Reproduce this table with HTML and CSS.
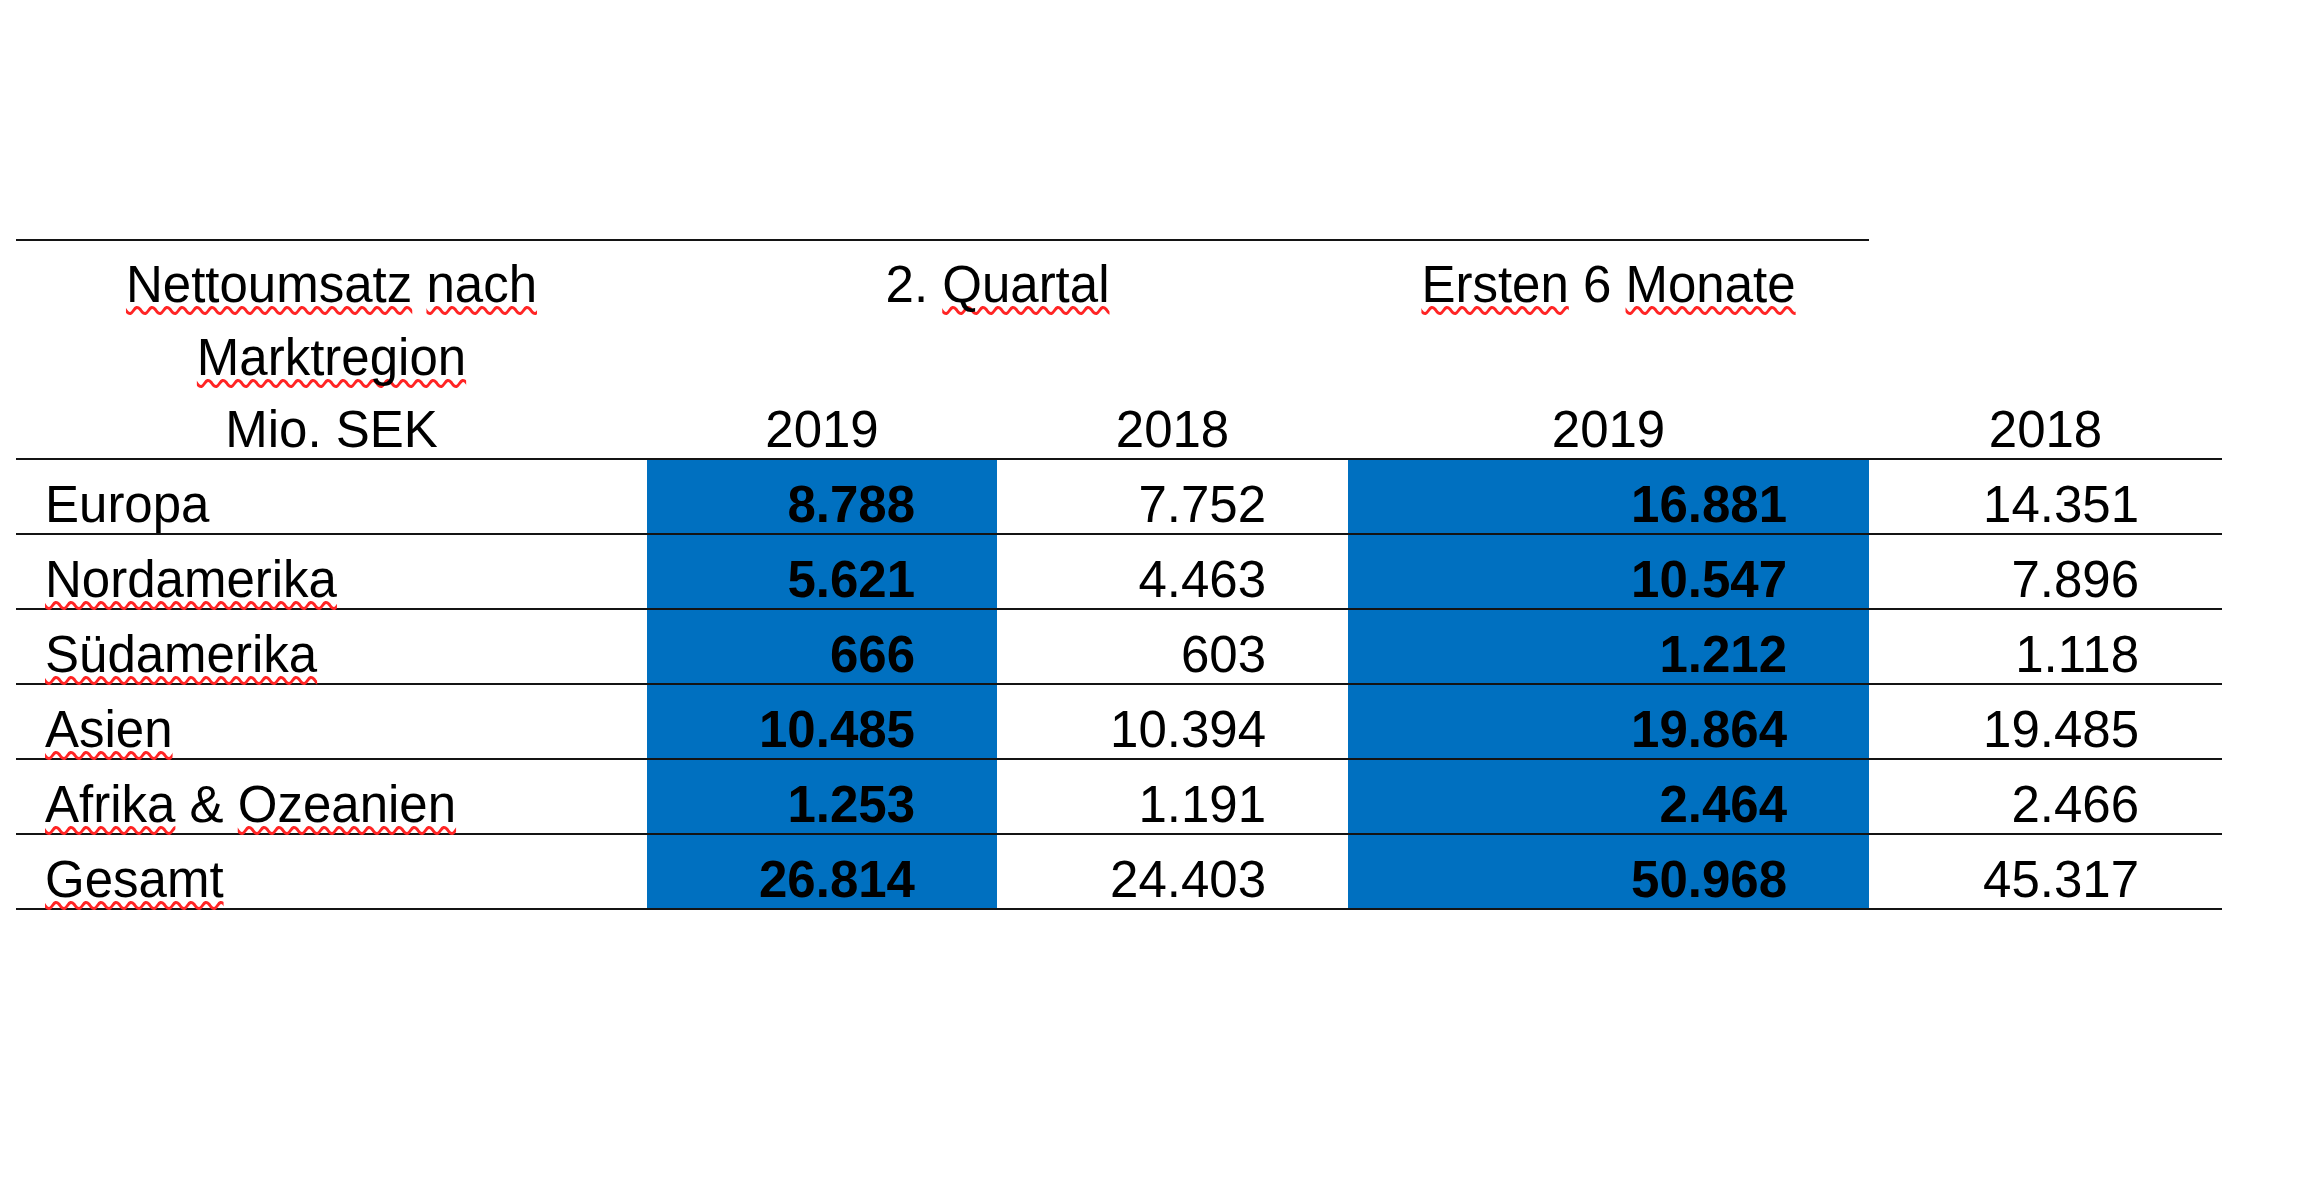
FILE: index.html
```html
<!DOCTYPE html>
<html lang="de">
<head>
<meta charset="utf-8">
<title>Nettoumsatz nach Marktregion</title>
<link rel="stylesheet" href="styles.css">
</head>
<body>
<table class="sales">
  <colgroup>
    <col class="c-region">
    <col class="c-q19">
    <col class="c-q18">
    <col class="c-h19">
    <col class="c-h18">
  </colgroup>
  <thead>
    <tr class="head-top">
      <th class="stub ruled" rowspan="2">
        <div class="stub-text"><span class="sp">Nettoumsatz</span> <span class="sp">nach</span><br><span class="sp">Marktregion</span><br>Mio. SEK</div>
      </th>
      <th class="group ruled" colspan="2">2. <span class="sp">Quartal</span></th>
      <th class="group ruled"><span class="sp">Ersten</span> 6 <span class="sp">Monate</span></th>
      <th class="group"></th>
    </tr>
    <tr class="head-years">
      <th class="year">2019</th>
      <th class="year">2018</th>
      <th class="year">2019</th>
      <th class="year">2018</th>
    </tr>
  </thead>
  <tbody>
    <tr>
      <td class="region">Europa</td>
      <td class="num hi">8.788</td>
      <td class="num">7.752</td>
      <td class="num hi">16.881</td>
      <td class="num last">14.351</td>
    </tr>
    <tr>
      <td class="region"><span class="sp">Nordamerika</span></td>
      <td class="num hi">5.621</td>
      <td class="num">4.463</td>
      <td class="num hi">10.547</td>
      <td class="num last">7.896</td>
    </tr>
    <tr>
      <td class="region"><span class="sp">Südamerika</span></td>
      <td class="num hi">666</td>
      <td class="num">603</td>
      <td class="num hi">1.212</td>
      <td class="num last">1.118</td>
    </tr>
    <tr>
      <td class="region"><span class="sp">Asien</span></td>
      <td class="num hi">10.485</td>
      <td class="num">10.394</td>
      <td class="num hi">19.864</td>
      <td class="num last">19.485</td>
    </tr>
    <tr>
      <td class="region"><span class="sp">Afrika</span> &amp; <span class="sp">Ozeanien</span></td>
      <td class="num hi">1.253</td>
      <td class="num">1.191</td>
      <td class="num hi">2.464</td>
      <td class="num last">2.466</td>
    </tr>
    <tr>
      <td class="region"><span class="sp">Gesamt</span></td>
      <td class="num hi">26.814</td>
      <td class="num">24.403</td>
      <td class="num hi">50.968</td>
      <td class="num last">45.317</td>
    </tr>
  </tbody>
</table>
</body>
</html>
```
FILE: styles.css
```css
html, body {
  margin: 0;
  padding: 0;
  background: #ffffff;
}

body {
  width: 2300px;
  height: 1200px;
  font-family: "Liberation Sans", Arial, sans-serif;
  color: #000000;
}

.sales {
  margin: 239px 0 0 16px;
  width: 2206px;
  table-layout: fixed;
  border-collapse: separate;
  border-spacing: 0;
  font-size: 51px;
}

.c-region { width: 631px; }
.c-q19 { width: 350px; }
.c-q18 { width: 351px; }
.c-h19 { width: 521px; }
.c-h18 { width: 353px; }

th, td {
  padding: 0;
  font-weight: normal;
}

.sp {
  text-decoration: underline wavy #ff2424;
  text-decoration-thickness: 2.5px;
  text-underline-offset: 4px;
  text-decoration-skip-ink: none;
}

/* header */
.head-top {
  height: 162px;
}

.head-years {
  height: 59px;
}

.ruled {
  border-top: 2px solid #141414;
}

.stub {
  vertical-align: top;
  text-align: center;
  padding-top: 8px;
  border-bottom: 2px solid #141414;
}

.stub-text {
  height: 209px;
  line-height: 72.5px;
}

.group {
  vertical-align: top;
  text-align: center;
  padding-top: 8px;
  line-height: 72px;
}

.year {
  vertical-align: bottom;
  text-align: center;
  line-height: 57px;
  border-bottom: 2px solid #141414;
}

/* body */
tbody tr {
  height: 75px;
}

tbody td {
  vertical-align: bottom;
  line-height: 57px;
  border-bottom: 2px solid #141414;
  white-space: nowrap;
}

.region {
  text-align: left;
  padding-left: 29px;
}

.num {
  text-align: right;
  padding-right: 82px;
}

.num.last {
  padding-right: 83px;
}

.hi {
  background: #0070c0;
  font-weight: bold;
}
```
